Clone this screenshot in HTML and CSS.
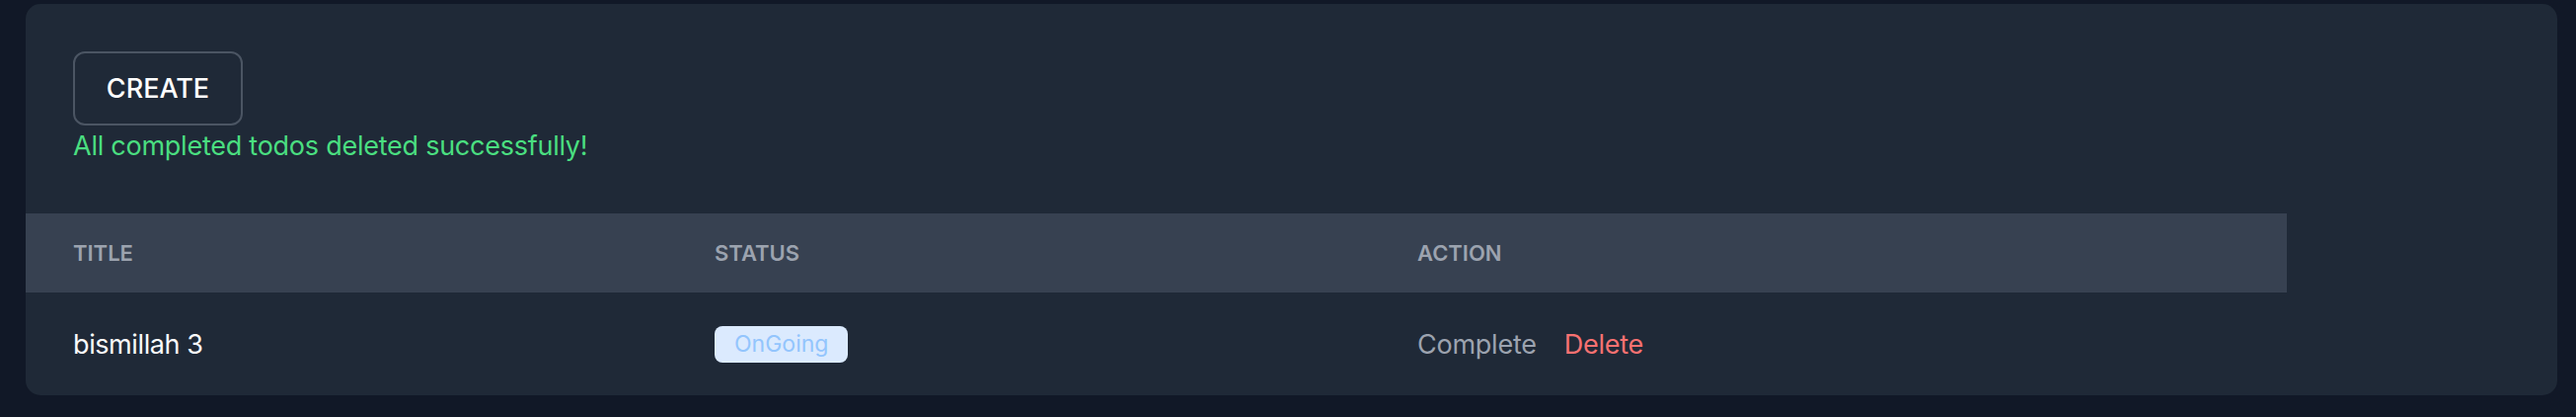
FILE: index.html
```html
<!DOCTYPE html>
<html lang="en">
<head>
<meta charset="utf-8">
<title>Todos</title>
<link rel="stylesheet" href="styles.css">
</head>
<body>
<main class="card">
  <section class="top">
    <button class="btn-create" type="button">CREATE</button>
    <p class="msg-success">All completed todos deleted successfully!</p>
  </section>
  <table class="todo-table">
    <colgroup>
      <col class="col-title">
      <col class="col-status">
      <col class="col-action">
    </colgroup>
    <thead>
      <tr>
        <th>Title</th>
        <th>Status</th>
        <th>Action</th>
      </tr>
    </thead>
    <tbody>
      <tr>
        <td class="cell-title">bismillah 3</td>
        <td><span class="badge">OnGoing</span></td>
        <td>
          <div class="actions">
            <a class="act-complete">Complete</a>
            <a class="act-delete">Delete</a>
          </div>
        </td>
      </tr>
    </tbody>
  </table>
</main>
</body>
</html>
```
FILE: styles.css
```css
* { box-sizing: border-box; }
html, body { margin: 0; padding: 0; }
body {
  background: #111827;
  font-family: "Inter", "Liberation Sans", sans-serif;
  padding: 4px 19px 22px 26px;
}
.card {
  display: block;
  background: #1f2937;
  border-radius: 15px;
  height: 396px;
  overflow: hidden;
}
.top {
  padding: 48px 48px 0 48px;
}
.btn-create {
  display: block;
  width: 172px;
  height: 75px;
  background: transparent;
  border: 2px solid #4b5563;
  border-radius: 12px;
  color: #ffffff;
  font-family: inherit;
  font-size: 27px;
  font-weight: 500;
  padding: 0;
}
.msg-success {
  margin: 1px 0 0 0;
  font-size: 27px;
  line-height: 40px;
  letter-spacing: -0.25px;
  color: #4ade80;
}
.todo-table {
  margin-top: 48px;
  width: 2291px;
  table-layout: fixed;
  border-collapse: collapse;
}
.col-title { width: 650px; }
.col-status { width: 712px; }
.col-action { width: 929px; }
.todo-table th {
  background: #374151;
  height: 80px;
  padding: 0 0 0 48px;
  text-align: left;
  text-transform: uppercase;
  font-size: 22px;
  font-weight: 600;
  color: #9ca3af;
  vertical-align: middle;
}
.todo-table td {
  height: 104px;
  padding: 0 0 0 48px;
  vertical-align: middle;
  font-size: 27px;
}
.cell-title { color: #f9fafb; letter-spacing: -0.4px; }
.badge {
  display: inline-flex;
  align-items: center;
  height: 37px;
  padding: 0 20px;
  border-radius: 8px;
  background: #dbeafe;
  color: #93c5fd;
  font-size: 23px;
  font-weight: 400;
}
.actions {
  display: flex;
  gap: 28px;
  align-items: baseline;
  letter-spacing: -0.25px;
}
.act-complete { color: #9ca3af; }
.act-delete { color: #f87171; }
```
